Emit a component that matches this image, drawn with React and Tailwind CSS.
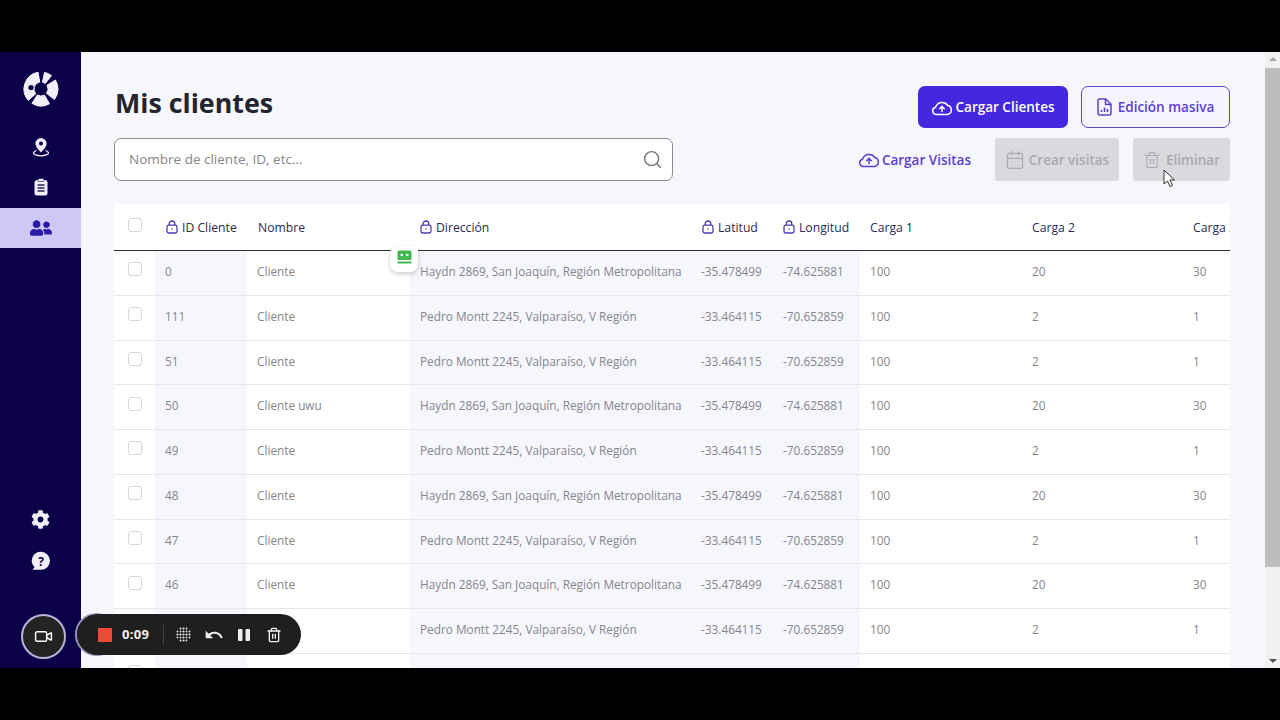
import { FaUserFriends, FaCog } from 'react-icons/fa'
import { MdUndo } from 'react-icons/md'
import { Search, Video, Trash2, CalendarDays } from 'lucide-react'

const HAYDN = 'Haydn 2869, San Joaquín, Región Metropolitana'
const PEDRO = 'Pedro Montt 2245, Valparaíso, V Región'

const rows = [
  { id: '0', name: 'Cliente', h: true },
  { id: '111', name: 'Cliente', h: false },
  { id: '51', name: 'Cliente', h: false },
  { id: '50', name: 'Cliente uwu', h: true },
  { id: '49', name: 'Cliente', h: false },
  { id: '48', name: 'Cliente', h: true },
  { id: '47', name: 'Cliente', h: false },
  { id: '46', name: 'Cliente', h: true },
  { id: '45', name: 'Cliente', h: false },
  { id: '44', name: 'Cliente', h: true },
]

// ring segment of the logo, angles in degrees clockwise from 12 o'clock
function sector(a0, a1, r0, r1) {
  const pt = (a, r) => {
    const t = (a * Math.PI) / 180
    return `${(18 + r * Math.sin(t)).toFixed(2)} ${(18 - r * Math.cos(t)).toFixed(2)}`
  }
  const big = a1 - a0 > 180 ? 1 : 0
  return `M${pt(a0, r0)} L${pt(a0, r1)} A${r1} ${r1} 0 ${big} 1 ${pt(a1, r1)} L${pt(a1, r0)} A${r0} ${r0} 0 ${big} 0 ${pt(a0, r0)} Z`
}

function Logo() {
  return (
    <svg width="36" height="36" viewBox="0 0 36 36">
      <g fill="#f1effa" stroke="#f1effa" strokeWidth="1" strokeLinejoin="round">
        <path d={sector(228, 350, 7, 17)} />
        <path d={sector(12, 38, 7, 17)} />
        <path d={sector(58, 128, 7, 17)} />
        <path d={sector(150, 212, 7, 17)} />
      </g>
      <circle cx="8" cy="16.500" r="2.600" fill="#0c0048" />
    </svg>
  )
}

function PinIcon() {
  return (
    <svg width="18" height="20" viewBox="0 0 18 20" fill="none">
      <path d="M9 1a5.600 5.600 0 0 0-5.600 5.600C3.400 10.400 9 15.500 9 15.500s5.600-5.100 5.600-8.900A5.600 5.600 0 0 0 9 1z" fill="#f1effa" />
      <circle cx="9" cy="6.600" r="2" fill="#0c0048" />
      <path d="M4.500 13.500C2.500 14.200 1.500 15 1.500 16c0 1.500 3.400 2.800 7.500 2.800s7.500-1.300 7.500-2.800c0-1-1-1.800-3-2.500" stroke="#f1effa" strokeWidth="1.300" />
    </svg>
  )
}

function ClipboardIcon() {
  return (
    <svg width="14" height="18" viewBox="0 0 14 18">
      <rect x="0.500" y="2" width="13" height="15.500" rx="2.500" fill="#f1effa" />
      <rect x="4" y="0.500" width="6" height="3" rx="1" fill="#f1effa" stroke="#0c0048" strokeWidth="0.600" />
      <g stroke="#0c0048" strokeWidth="1.300">
        <line x1="3.500" y1="7" x2="10.500" y2="7" />
        <line x1="3.500" y1="10" x2="10.500" y2="10" />
        <line x1="3.500" y1="13" x2="10.500" y2="13" />
      </g>
    </svg>
  )
}

function HelpIcon() {
  return (
    <svg width="20" height="20" viewBox="0 0 20 20">
      <path d="M10 .8a9 9 0 0 1 0 18H1.500l2-2.600A9 9 0 0 1 10 .8z" fill="#f1effa" />
      <text x="10" y="14.500" textAnchor="middle" fontSize="12" fontWeight="700" fontFamily="Open Sans" fill="#0c0048">?</text>
    </svg>
  )
}

function LockIcon() {
  return (
    <svg width="12" height="14" viewBox="0 0 12 14" fill="none" stroke="#4a3fb0" strokeWidth="1.300" className="shrink-0">
      <rect x="1" y="5.200" width="10" height="7.800" rx="1.800" />
      <path d="M3.200 5.200V3.800a2.800 2.800 0 0 1 5.600 0v1.400" />
      <circle cx="6" cy="9" r="0.800" fill="#4a3fb0" stroke="none" />
    </svg>
  )
}

function CloudUp({ color }) {
  return (
    <svg width="20" height="17" viewBox="0 0 20 17" fill="none" stroke={color} strokeWidth="1.500" strokeLinejoin="round">
      <path d="M5 15.500H4.500a3.700 3.700 0 0 1-.9-7.300A6.800 6.800 0 0 1 15.800 6.500a4.600 4.600 0 0 1-.3 9z" />
      <path d="M10 12.500V7.500M7.700 9.700 10 7.400l2.300 2.300" strokeLinecap="round" />
    </svg>
  )
}

function ReportIcon() {
  return (
    <svg width="15" height="18" viewBox="0 0 15 18" fill="none" stroke="#5b3fd0" strokeWidth="1.500" strokeLinejoin="round">
      <path d="M2.500 1h6.300L14 6.200v8.800a2 2 0 0 1-2 2H3a2 2 0 0 1-2-2V2.500A1.500 1.500 0 0 1 2.500 1z" />
      <path d="M8.500 1v5.500H14" />
      <path d="M4.500 14v-2M7.500 14V9.500M10.500 14v-3" strokeWidth="1.600" />
    </svg>
  )
}

function Check({ className }) {
  return <div className={`h-[14px] w-[14px] rounded-[3px] border border-[#d8d8dc] bg-white ${className}`} />
}

function HeadCell({ lock, children, className = 'pl-[10px]' }) {
  return (
    <div className={`flex items-center gap-[4px] overflow-hidden whitespace-nowrap ${className}`}>
      {lock && <LockIcon />}
      <span className="pt-[2px]">{children}</span>
    </div>
  )
}

const gridCols = 'grid grid-cols-[41px_92px_163px_281px_81px_88px_162px_161px_47px]'

function ClientRow({ row }) {
  const cell = 'flex items-center overflow-hidden whitespace-nowrap pb-[2px] pl-[10px]'
  return (
    <div className={`${gridCols} h-[44.75px] border-b border-[#e6e7ec] bg-white text-[11.8px] text-[#85858c]`}>
      <div className="flex items-center pl-[14px]">
        <Check className="mb-[7px]" />
      </div>
      <div className={`${cell} bg-[#f6f7fc]`}>{row.id}</div>
      <div className={cell}>{row.name}</div>
      <div className={`${cell} bg-[#f6f7fc]`}>{row.h ? HAYDN : PEDRO}</div>
      <div className={`${cell} bg-[#f6f7fc]`}>{row.h ? '-35.478499' : '-33.464115'}</div>
      <div className={`${cell} bg-[#f6f7fc] pl-[11px]`}>{row.h ? '-74.625881' : '-70.652859'}</div>
      <div className={cell}>100</div>
      <div className={cell}>{row.h ? '20' : '2'}</div>
      <div className={cell}>{row.h ? '30' : '1'}</div>
    </div>
  )
}

function Sidebar() {
  return (
    <aside className="flex w-[81px] shrink-0 flex-col items-center bg-[#0c0048]">
      <div className="mt-[19px] flex h-[36px] items-center justify-center">
        <Logo />
      </div>
      <div className="mt-[30px] flex h-[20px] items-center justify-center">
        <PinIcon />
      </div>
      <div className="mt-[20px] flex h-[20px] items-center justify-center">
        <ClipboardIcon />
      </div>
      <div className="mt-[11px] flex h-[40px] w-full items-center justify-center bg-[#cfc8f7]">
        <FaUserFriends className="text-[22px] text-[#2a1aa8]" />
      </div>
      <div className="mt-auto mb-[97px] flex flex-col items-center gap-[22px]">
        <FaCog className="text-[19px] text-[#f1effa]" />
        <HelpIcon />
      </div>
    </aside>
  )
}

function Recorder() {
  return (
    <>
      <div className="absolute left-[21px] top-[562px] flex h-[45px] w-[45px] items-center justify-center rounded-full border-2 border-[#b9b4d8] bg-[#232323]">
        <Video size={19} strokeWidth={1.800} className="text-white" />
      </div>
      <div className="absolute left-[75px] top-[561px] h-[43px] w-[43px] rounded-full border-2 border-[#9a96ba]" />
      <div className="absolute left-[77px] top-[562px] flex h-[41px] w-[224px] items-center rounded-full bg-[#1f1f1f] pl-[21px] text-white">
        <div className="h-[14px] w-[14px] bg-[#ee4b37]" />
        <span className="ml-[10px] w-[29px] text-[13px] font-bold tracking-[0.3px] text-[#f0f0f0]">0:09</span>
        <div className="ml-[12px] h-[20px] w-px bg-[#444444]" />
        <svg width="15" height="15" viewBox="0 0 15 15" fill="#e8e8e8" className="ml-[12px]">
          {[1.500, 4.500, 7.500, 10.500, 13.500].map((y) =>
            [1.500, 4.500, 7.500, 10.500, 13.500].map((x) =>
              (x === 1.500 || x === 13.500) && (y === 1.500 || y === 13.500) ? null : (
                <circle key={`${x}-${y}`} cx={x} cy={y} r={x === 7.500 || y === 7.500 ? 1.100 : 0.900} />
              ),
            ),
          )}
        </svg>
        <MdUndo size={20} className="ml-[13px] text-[#f0f0f0]" />
        <svg width="14" height="14" viewBox="0 0 14 14" fill="#f0f0f0" className="ml-[13px]">
          <rect x="1" y="1" width="4.500" height="12" rx="1" />
          <rect x="8.500" y="1" width="4.500" height="12" rx="1" />
        </svg>
        <Trash2 size={16} strokeWidth={2} className="ml-[15px] text-[#f0f0f0]" />
      </div>
    </>
  )
}

export default function App() {
  return (
    <div className="flex h-screen flex-col overflow-hidden bg-black font-['Open_Sans',sans-serif]">
      <div className="h-[52px] shrink-0 bg-black" />

      <div className="relative flex h-[616px] shrink-0">
        <Sidebar />

        <main className="min-w-0 flex-1 overflow-hidden bg-[#f6f7fd] pl-[33px] pr-[35px] pt-[34px]">
          <div className="flex items-start justify-between">
            <h1 className="ml-px -mt-[2px] mb-px text-[26.800px] font-bold leading-[37px] text-[#24242e]">Mis clientes</h1>
            <div className="flex gap-[13px]">
              <button className="flex h-[42px] w-[150px] items-center justify-center gap-[4px] rounded-[7px] bg-[#4527e0] text-[13.500px] font-semibold text-white">
                <CloudUp color="#ffffff" />
                Cargar Clientes
              </button>
              <button className="flex h-[42px] w-[149px] items-center justify-center gap-[6px] rounded-[7px] border border-[#5b45c0] bg-[#f6f5fe] text-[13.500px] font-semibold text-[#5b3fd0]">
                <ReportIcon />
                Edición masiva
              </button>
            </div>
          </div>

          <div className="mt-[10px] flex items-center">
            <div className="flex h-[43px] w-[559px] items-center justify-between rounded-[7px] border border-[#8b8b92] bg-white pl-[14px] pr-[9px]">
              <span className="text-[13.500px] text-[#85858c]">Nombre de cliente, ID, etc...</span>
              <Search size={21} strokeWidth={1.700} className="text-[#77777e]" />
            </div>
            <div className="ml-auto flex items-center gap-[3px] text-[13.500px] font-semibold text-[#5b3fd0]">
              <CloudUp color="#5b3fd0" />
              <span className="pt-[1px]">Cargar Visitas</span>
            </div>
            <div className="ml-[24px] flex h-[43px] w-[124px] items-center justify-center gap-[4px] rounded-[3px] bg-[#d9d9de] text-[13.500px] font-semibold text-[#a9a9b0]">
              <CalendarDays size={20} strokeWidth={1.500} />
              <span className="pt-[1px]">Crear visitas</span>
            </div>
            <div className="ml-[14px] flex h-[43px] w-[97px] items-center justify-center gap-[5px] rounded-[3px] bg-[#d9d9de] text-[13.500px] font-semibold text-[#a9a9b0]">
              <Trash2 size={18} strokeWidth={1.500} />
              <span className="pt-[1px]">Eliminar</span>
            </div>
          </div>

          <div className="relative mt-[23px] overflow-hidden">
            <div className={`${gridCols} h-[47px] border-b border-[#2e2e3a] bg-white text-[12.2px] font-medium text-[#2b2b55]`}>
              <div className="flex items-center pl-[14px]">
                <Check className="mb-[4px]" />
              </div>
              <HeadCell lock className="pl-[11px]">ID Cliente</HeadCell>
              <HeadCell className="pl-[11px]">Nombre</HeadCell>
              <HeadCell lock>Dirección</HeadCell>
              <HeadCell lock className="pl-[11px]">Latitud</HeadCell>
              <HeadCell lock className="pl-[11px]">Longitud</HeadCell>
              <HeadCell>Carga 1</HeadCell>
              <HeadCell>Carga 2</HeadCell>
              <HeadCell>Carga 3</HeadCell>
            </div>
            {rows.map((row) => (
              <ClientRow key={row.id} row={row} />
            ))}
            {/* extension badge over the table */}
            <div className="absolute left-[276px] top-[42px] flex h-[26px] w-[28px] items-start justify-center rounded-b-[8px] rounded-tl-[8px] bg-white pt-[4px] shadow-[0_2px_4px_rgba(0,0,0,0.2)]">
              <svg width="15" height="14" viewBox="0 0 15 14">
                <rect x="0.500" y="0.500" width="14" height="9.500" rx="1.500" fill="#3fb950" />
                <circle cx="4.800" cy="5" r="1.300" fill="#ffffff" />
                <circle cx="10.200" cy="5" r="1.300" fill="#ffffff" />
                <rect x="0.500" y="11.500" width="14" height="2" fill="#3fb950" />
              </svg>
            </div>
          </div>
        </main>

        <div className="flex w-[15px] shrink-0 flex-col items-center bg-[#f1f1f1]">
          <div className="mt-[5px] h-0 w-0 border-x-[4px] border-b-[4px] border-x-transparent border-b-[#a3a3a3]" />
          <div className="mt-[7px] h-[499px] w-full bg-[#bdbdbd]" />
          <div className="mt-auto mb-[5px] h-0 w-0 border-x-[4px] border-t-[4px] border-x-transparent border-t-[#505050]" />
        </div>

        <Recorder />

        <svg width="14" height="20" viewBox="0 0 14 20" className="absolute left-[1163px] top-[117px]">
          <path d="M1 1v14l3.500-3 2.500 5.500 2.500-1L7 11h4.500z" fill="#ffffff" stroke="#333333" strokeWidth="1" />
        </svg>
      </div>

      <div className="flex-1 bg-black" />
    </div>
  )
}
